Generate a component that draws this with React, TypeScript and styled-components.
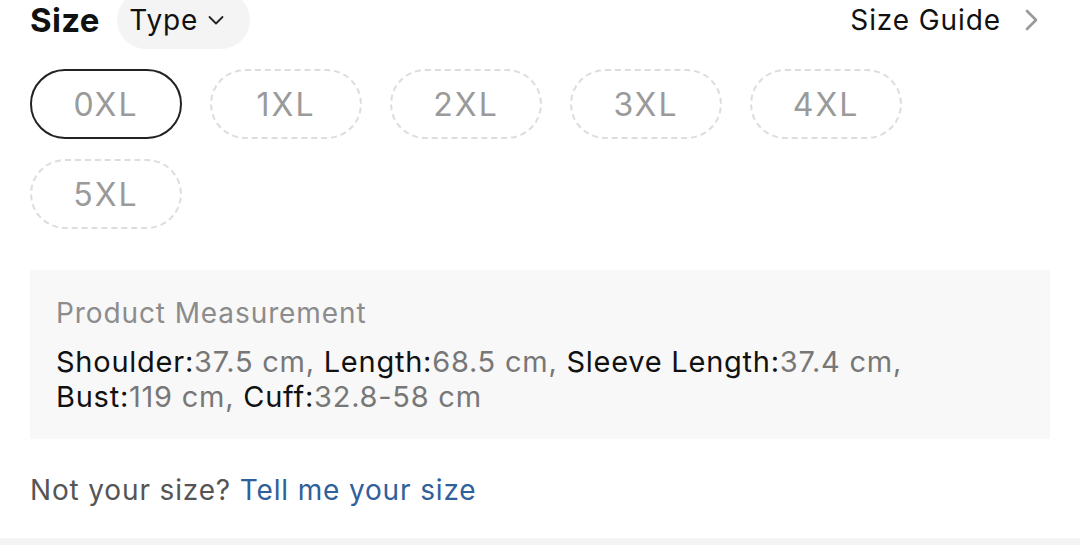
import React from "react";
import styled, { createGlobalStyle } from "styled-components";

const Global = createGlobalStyle`
  html, body { margin: 0; padding: 0; background: #ffffff; overflow: hidden; }
  body { font-family: Inter, "Liberation Sans", Arial, sans-serif; -webkit-font-smoothing: antialiased; }
`;

const Page = styled.div`
  width: 1080px;
  height: 545px;
  display: flex;
  flex-direction: column;
  overflow: hidden;
`;

const Content = styled.div`
  padding: 0 30px;
  display: flex;
  flex-direction: column;
`;

const Header = styled.div`
  margin-top: -9px;
  height: 58px;
  display: flex;
  align-items: center;
  justify-content: space-between;
  padding-right: 12px;
`;

const HeaderLeft = styled.div`
  display: flex;
  align-items: center;
  gap: 17px;
`;

const Title = styled.span`
  font-size: 33px;
  font-weight: 700;
  color: #111;
  letter-spacing: 0.3px;
`;

const TypePill = styled.button`
  height: 58px;
  width: 133px;
  border: none;
  border-radius: 29px;
  background: #f4f4f4;
  display: flex;
  align-items: center;
  justify-content: center;
  gap: 9px;
  font-family: inherit;
  font-size: 28px;
  letter-spacing: 0.8px;
  color: #111;
  padding: 0 12px 0 0;
`;

const GuideLink = styled.div`
  display: flex;
  align-items: center;
  gap: 23px;
  font-size: 28px;
  letter-spacing: 0.9px;
  color: #111;
`;

const Pills = styled.div`
  margin-top: 20px;
  display: flex;
  flex-wrap: wrap;
  column-gap: 28px;
  row-gap: 20px;
  width: 880px;
`;

const SizePill = styled.div<{ $selected?: boolean }>`
  box-sizing: border-box;
  width: 152px;
  height: 70px;
  border-radius: 35px;
  border: 2px ${(p) => (p.$selected ? "solid #222" : "dashed #dddddd")};
  display: flex;
  align-items: center;
  justify-content: center;
  font-size: 32px;
  letter-spacing: 2px;
  color: #9a9a9a;
`;

const MeasureBox = styled.div`
  margin-top: 41px;
  background: #f8f8f8;
  height: 169px;
  box-sizing: border-box;
  padding: 25px 26px 0;
`;

const MeasureTitle = styled.div`
  font-size: 28px;
  letter-spacing: 0.9px;
  line-height: 36px;
  color: #8c8c8c;
`;

const MeasureText = styled.div`
  margin-top: 13px;
  font-size: 29px;
  letter-spacing: 0.75px;
  line-height: 35px;
  color: #777;
`;

const Label = styled.span`
  color: #111;
`;

const Footer = styled.div`
  margin-top: 33px;
  font-size: 28px;
  letter-spacing: 0.85px;
  line-height: 36px;
  color: #555;
`;

const TellLink = styled.a`
  color: #30609a;
  text-decoration: none;
`;

const Divider = styled.div`
  margin-top: 30px;
  height: 12px;
  background: #f4f4f4;
`;

const sizes = ["0XL", "1XL", "2XL", "3XL", "4XL", "5XL"];

const measures: [string, string][] = [
  ["Shoulder:", "37.5 cm"],
  ["Length:", "68.5 cm"],
  ["Sleeve Length:", "37.4 cm"],
  ["Bust:", "119 cm"],
  ["Cuff:", "32.8-58 cm"],
];

export default function App() {
  return (
    <>
      <Global />
      <Page>
        <Content>
          <Header>
            <HeaderLeft>
              <Title>Size</Title>
              <TypePill>
                Type
                <svg width="18" height="12" viewBox="0 0 18 12" fill="none">
                  <path d="M2.5 3l6.5 6.5L15.5 3" stroke="#222" strokeWidth="1.8" strokeLinecap="round" strokeLinejoin="round" />
                </svg>
              </TypePill>
            </HeaderLeft>
            <GuideLink>
              Size Guide
              <svg width="14" height="22" viewBox="0 0 14 22" fill="none">
                <path d="M3 2l9 9-9 9" stroke="#999" strokeWidth="2.6" strokeLinecap="round" strokeLinejoin="round" />
              </svg>
            </GuideLink>
          </Header>
          <Pills>
            {sizes.map((s, i) => (
              <SizePill key={s} $selected={i === 0}>
                {s}
              </SizePill>
            ))}
          </Pills>
          <MeasureBox>
            <MeasureTitle>Product Measurement</MeasureTitle>
            <MeasureText>
              {measures.map(([k, v], i) => (
                <React.Fragment key={k}>
                  <Label>{k}</Label>
                  {v}
                  {i < measures.length - 1 ? ", " : ""}
                  {i === 2 ? <br /> : null}
                </React.Fragment>
              ))}
            </MeasureText>
          </MeasureBox>
          <Footer>
            Not your size? <TellLink href="#">Tell me your size</TellLink>
          </Footer>
        </Content>
        <Divider />
      </Page>
    </>
  );
}
